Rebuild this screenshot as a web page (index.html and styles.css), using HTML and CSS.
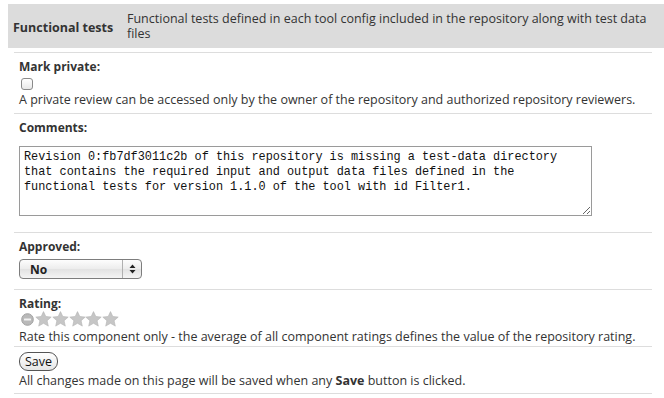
FILE: index.html
```html
<!DOCTYPE html>
<html lang="en">
<head>
    <meta charset="UTF-8">
    <title>Review component</title>
    <link rel="stylesheet" href="styles.css">
</head>
<body>
    <div class="componente">
        <div class="cabecera">
            <div class="nombre">Functional tests</div>
            <div class="descripcion">Functional tests defined in each tool config included in the repository along with test data files</div>
        </div>
        <div class="fila privado">
            <label class="etiqueta">Mark private:</label>
            <span class="casilla"></span>
            <div class="ayuda">A private review can be accessed only by the owner of the repository and authorized repository reviewers.</div>
        </div>
        <div class="fila comentarios">
            <label class="etiqueta">Comments:</label>
            <textarea class="comentario">Revision 0:fb7df3011c2b of this repository is missing a test-data directory
that contains the required input and output data files defined in the
functional tests for version 1.1.0 of the tool with id Filter1.</textarea>
        </div>
        <div class="fila aprobado">
            <label class="etiqueta">Approved:</label>
            <div class="selector">
                <span class="valor">No</span>
                <span class="flechas">
                    <svg width="7" height="10" viewBox="0 0 7 10"><path d="M3.5 0.5 L6.5 4 L0.5 4 Z M0.5 6 L6.5 6 L3.5 9.5 Z" fill="#222"/></svg>
                </span>
            </div>
        </div>
        <div class="fila valoracion">
            <label class="etiqueta">Rating:</label>
            <div class="estrellas">
                <svg class="cancelar" width="13" height="13" viewBox="0 0 13 13">
                    <circle cx="6.5" cy="6.5" r="5.8" fill="#b9b9b9" stroke="#a0a0a0"/>
                    <rect x="3" y="5.4" width="7" height="2.2" rx="0.5" fill="#f2f2f2"/>
                </svg>
                <svg class="estrella" width="17" height="16" viewBox="0 0 17 16"><path d="M8.5 0.6 L10.8 5.5 L16.2 6.1 L12.1 9.7 L13.3 15.1 L8.5 12.3 L3.7 15.1 L4.9 9.7 L0.8 6.1 L6.2 5.5 Z"/></svg>
                <svg class="estrella" width="17" height="16" viewBox="0 0 17 16"><path d="M8.5 0.6 L10.8 5.5 L16.2 6.1 L12.1 9.7 L13.3 15.1 L8.5 12.3 L3.7 15.1 L4.9 9.7 L0.8 6.1 L6.2 5.5 Z"/></svg>
                <svg class="estrella" width="17" height="16" viewBox="0 0 17 16"><path d="M8.5 0.6 L10.8 5.5 L16.2 6.1 L12.1 9.7 L13.3 15.1 L8.5 12.3 L3.7 15.1 L4.9 9.7 L0.8 6.1 L6.2 5.5 Z"/></svg>
                <svg class="estrella" width="17" height="16" viewBox="0 0 17 16"><path d="M8.5 0.6 L10.8 5.5 L16.2 6.1 L12.1 9.7 L13.3 15.1 L8.5 12.3 L3.7 15.1 L4.9 9.7 L0.8 6.1 L6.2 5.5 Z"/></svg>
                <svg class="estrella" width="17" height="16" viewBox="0 0 17 16"><path d="M8.5 0.6 L10.8 5.5 L16.2 6.1 L12.1 9.7 L13.3 15.1 L8.5 12.3 L3.7 15.1 L4.9 9.7 L0.8 6.1 L6.2 5.5 Z"/></svg>
            </div>
            <div class="ayuda">Rate this component only - the average of all component ratings defines the value of the repository rating.</div>
        </div>
        <div class="fila guardado">
            <button class="guardar">Save</button>
            <div class="ayuda">All changes made on this page will be saved when any <b>Save</b> button is clicked.</div>
        </div>
    </div>
</body>
</html>
```

FILE: styles.css
```css
body {
    margin: 4px 0 0 8px;
    background: #fff;
    font-family: 'Open Sans', 'Liberation Sans', Arial, sans-serif;
    font-size: 12px;
    color: #333;
}
.cabecera {
    display: flex;
    align-items: center;
    background: #dcdcdc;
    height: 44px;
    margin-bottom: 4px;
}
.nombre {
    font-weight: bold;
    font-size: 12.5px;
    width: 119px;
    padding: 3px 0 0 5px;
    box-sizing: border-box;
}
.descripcion {
    flex: 1;
    font-size: 12.5px;
    line-height: 15px;
    padding-right: 4px;
}
.fila {
    margin: 0 12px 0 6px;
    padding: 6px 5px 5px 5px;
    border-top: 1px solid #ddd;
    line-height: 15px;
}
.fila:last-child {
    border-bottom: 1px solid #ddd;
}
.etiqueta {
    display: block;
    font-weight: bold;
}
.ayuda {
    font-size: 12.5px;
}
.privado {
    padding-bottom: 6px;
}
.casilla {
    display: block;
    width: 10px;
    height: 10px;
    border: 1px solid #8a8a8a;
    border-radius: 3px;
    background: linear-gradient(#fff, #e8e8e8);
    margin: 4px 0 0 2px;
}
.privado .ayuda {
    margin-top: 2px;
}
.comentario {
    display: block;
    width: 573px;
    height: 70px;
    box-sizing: border-box;
    margin: 11px 0 11px 0;
    padding: 3px 4px;
    border: 1px solid #9a9a9a;
    font-family: 'Liberation Mono', 'Courier New', monospace;
    font-size: 11.85px;
    line-height: 15px;
    color: #111;
    resize: both;
}
.selector {
    display: flex;
    align-items: center;
    width: 123px;
    height: 20px;
    box-sizing: border-box;
    border: 1px solid #7d7d7d;
    border-radius: 4px;
    background: linear-gradient(#fdfdfd, #ececec 50%, #e2e2e2 51%, #f4f4f4);
    margin: 5px 0 5px 0;
}
.valor {
    flex: 1;
    padding-left: 10px;
    font-weight: bold;
    color: #222;
}
.flechas {
    display: flex;
    align-items: center;
    justify-content: center;
    width: 18px;
    height: 100%;
    border-left: 1px solid #b0b0b0;
}
.valoracion {
    padding-bottom: 2px;
}
.estrellas {
    display: flex;
    align-items: center;
    height: 16px;
}
.valoracion .ayuda {
    margin-top: 2px;
}
.cancelar {
    margin: 0 1px 0 2px;
}
.estrella {
    fill: #c6c6c6;
    stroke: #b4b4b4;
    stroke-width: 0.6;
    margin-right: -0.2px;
}
.guardado {
    padding-top: 5px;
}
.guardar {
    display: block;
    font-family: 'Open Sans', 'Liberation Sans', Arial, sans-serif;
    font-size: 12.5px;
    color: #111;
    padding: 0 5px;
    height: 19px;
    line-height: 16px;
    border: 1px solid #555;
    border-radius: 9px;
    background: linear-gradient(#fff, #e6e6e6);
}
.guardado .ayuda {
    margin-top: 2px;
}
```
